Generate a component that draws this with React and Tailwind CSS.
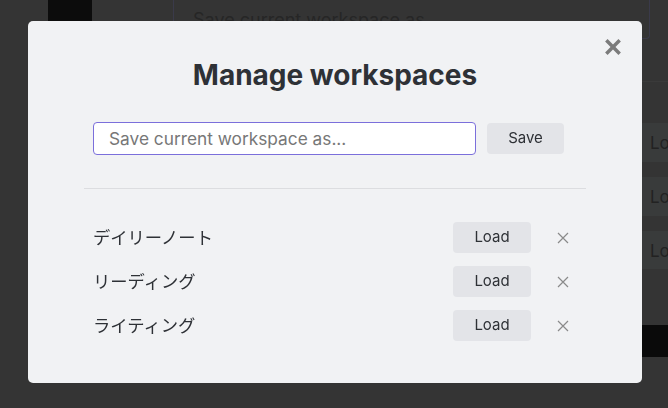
const items = ['デイリーノート', 'リーディング', 'ライティング']

function Cross({ size = 12, stroke = 1.2, className = '' }) {
  return (
    <svg width={size} height={size} viewBox="0 0 12 12" className={className}>
      <path d="M1 1 L11 11 M11 1 L1 11" stroke="currentColor" strokeWidth={stroke} strokeLinecap="butt" />
    </svg>
  )
}

export default function App() {
  return (
    <div
      className="relative h-[408px] w-[668px] overflow-hidden bg-[#343434]"
      style={{ fontFamily: 'Inter, "Noto Sans CJK JP", sans-serif' }}
    >
      {/* dimmed page behind the modal */}
      <div className="flex h-[39px]">
        <div className="ml-[48px] h-[21px] w-[44px] bg-[#0c0c0c]" />
        <div className="ml-[81px] flex h-[39px] w-[477px] items-end rounded-b-[4px] border border-t-0 border-[#3a3a4a] pb-[5px] pl-[19px] text-[18px] text-[#262626]">
          Save current workspace as...
        </div>
      </div>
      <div className="ml-[641px] mt-[42px] h-px bg-[#3a3a3a]" />
      <div className="ml-[642px] mt-[41px] flex flex-col gap-[15px]">
        <div className="h-[39px] bg-[#393b3b] pl-[8px] pt-[8px] text-[17px] text-[#222]">Lo</div>
        <div className="h-[39px] bg-[#393b3b] pl-[8px] pt-[8px] text-[17px] text-[#222]">Lo</div>
        <div className="h-[38px] bg-[#393b3b] pl-[8px] pt-[8px] text-[17px] text-[#222]">Lo</div>
      </div>
      <div className="ml-[642px] mt-[56px] h-[32px] bg-[#0a0a0a]" />

      {/* modal */}
      <div className="absolute left-[28px] top-[21px] flex h-[362px] w-[614px] flex-col rounded-[5px] bg-[#f1f2f4]">
        <button className="absolute right-[21px] top-[18px] text-[#7b7b7b]">
          <Cross size={16} stroke={2.6} />
        </button>
        <h1 className="mt-[37px] text-center text-[28px] font-bold leading-[34px] text-[#2e3136]">
          Manage workspaces
        </h1>
        <div className="ml-[65px] mt-[30px] flex items-center gap-[11px]">
          <input
            autoFocus
            placeholder="Save current workspace as..."
            className="h-[33px] w-[383px] rounded-[4px] border border-[#7b6fdb] bg-white px-[15px] text-[17.3px] text-[#2e3136] caret-[#222] outline-none placeholder:text-[#777]"
          />
          <button className="h-[31px] w-[77px] rounded-[4px] bg-[#e3e4e8] text-[15px] text-[#2e3136]">
            Save
          </button>
        </div>
        <div className="mx-[56px] mt-[33px] h-px bg-[#dcdde0]" />
        <div className="ml-[65px] mt-[33px] flex flex-col gap-[13px]">
          {items.map((name) => (
            <div key={name} className="flex h-[31px] items-center">
              <span className="w-[360px] text-[17.3px] text-[#2e3136]">{name}</span>
              <button className="h-[31px] w-[78px] rounded-[4px] bg-[#e3e4e8] text-[15px] text-[#2e3136]">
                Load
              </button>
              <span className="ml-[26px] text-[#8a8a8a]">
                <Cross size={12} stroke={1.2} />
              </span>
            </div>
          ))}
        </div>
      </div>
    </div>
  )
}
